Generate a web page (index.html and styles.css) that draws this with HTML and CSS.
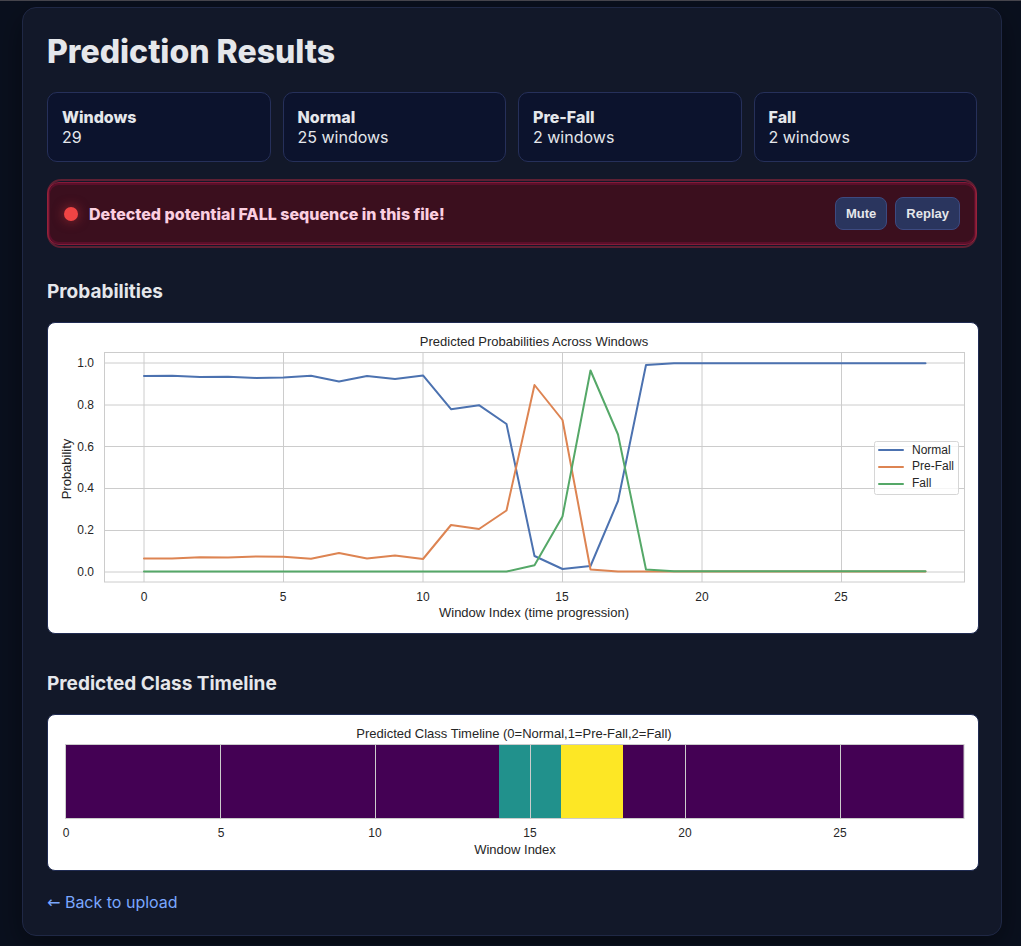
FILE: index.html
```html
<!DOCTYPE html>
<html lang="en">
<head>
<meta charset="utf-8">
<meta name="viewport" content="width=device-width, initial-scale=1">
<title>Prediction Results</title>
<link rel="stylesheet" href="styles.css">
</head>
<body>
<main class="card">
  <h1 class="title">Prediction Results</h1>

  <section class="stats" aria-label="Summary">
    <div class="stat"><strong>Windows</strong><span>29</span></div>
    <div class="stat"><strong>Normal</strong><span>25 windows</span></div>
    <div class="stat"><strong>Pre-Fall</strong><span>2 windows</span></div>
    <div class="stat"><strong>Fall</strong><span>2 windows</span></div>
  </section>

  <div class="alert" role="alert">
    <span class="alert-dot"></span>
    <strong class="alert-text">Detected potential FALL sequence in this file!</strong>
    <div class="alert-actions">
      <button class="btn" type="button">Mute</button>
      <button class="btn" type="button">Replay</button>
    </div>
  </div>

  <h2 class="heading">Probabilities</h2>
  <svg class="chart" viewBox="0 0 930 310" role="img" aria-label="Predicted probabilities across windows">
    <path class="grid" d="M96 29V259M235.5 29V259M375 29V259M514.5 29V259M654 29V259M793.5 29V259M56 40H916M56 82H916M56 123.5H916M56 165.5H916M56 207.5H916M56 249H916"/>
    <rect class="frame" x="56.5" y="29.5" width="860" height="229.5"/>
    <polyline class="line normal" points="96,53 124,52.8 152,54 180,53.7 208,54.9 235.5,54.6 263,52.7 291,58.4 319,53 347,55.9 375,52.4 403,86.2 431,82.2 458.5,101 486.5,233 514.5,246 542.5,243 570,178 598,42 626,40.2 877.5,40.2"/>
    <polyline class="line prefall" points="96,235.4 124,235.5 152,234.2 180,234.5 208,233.5 235.5,233.7 263,235.7 291,230 319,235.4 347,232.4 375,236 403,202 431,206 458.5,187.5 486.5,62 514.5,97 542.5,246.5 570,248.5 598,248.5 877.5,248.5"/>
    <polyline class="line fall" points="96,248.6 458.5,248.6 486.5,242.3 514.5,193.5 542.5,47.5 570,111.5 598,246.5 626,248.3 877.5,248.3"/>
    <text class="label mid" x="486" y="23">Predicted Probabilities Across Windows</text>
    <g class="tick end">
      <text x="46" y="44">1.0</text><text x="46" y="86">0.8</text><text x="46" y="128">0.6</text>
      <text x="46" y="169">0.4</text><text x="46" y="211">0.2</text><text x="46" y="253">0.0</text>
    </g>
    <g class="tick mid">
      <text x="96" y="278">0</text><text x="235" y="278">5</text><text x="375" y="278">10</text>
      <text x="514" y="278">15</text><text x="654" y="278">20</text><text x="793" y="278">25</text>
    </g>
    <text class="label mid" x="486" y="294">Window Index (time progression)</text>
    <text class="label mid" transform="translate(23 146) rotate(-90)">Probability</text>
    <rect class="legend" x="826.5" y="118.5" width="84" height="53" rx="2"/>
    <path class="line normal" d="M831 127H855"/>
    <path class="line prefall" d="M831 144H855"/>
    <path class="line fall" d="M831 161H855"/>
    <g class="tick">
      <text x="864" y="131">Normal</text><text x="864" y="147">Pre-Fall</text><text x="864" y="164">Fall</text>
    </g>
  </svg>

  <h2 class="heading">Predicted Class Timeline</h2>
  <svg class="chart" viewBox="0 0 930 155" role="img" aria-label="Predicted class timeline">
    <rect class="class-normal" x="18" y="29.5" width="898" height="74"/>
    <rect class="class-prefall" x="451" y="29.5" width="62" height="74"/>
    <rect class="class-fall" x="513" y="29.5" width="62" height="74"/>
    <path class="grid" d="M172.5 29V104M327.5 29V104M482.5 29V104M637.5 29V104M792.5 29V104"/>
    <rect class="frame" x="17.5" y="29.5" width="898.5" height="74"/>
    <text class="label mid" x="466" y="23">Predicted Class Timeline (0=Normal,1=Pre-Fall,2=Fall)</text>
    <g class="tick mid">
      <text x="18" y="122">0</text><text x="173" y="122">5</text><text x="327" y="122">10</text>
      <text x="482" y="122">15</text><text x="637" y="122">20</text><text x="792" y="122">25</text>
    </g>
    <text class="label mid" x="467" y="139">Window Index</text>
  </svg>

  <p class="back"><a href="#upload"><span class="arrow">←</span> Back to upload</a></p>
</main>
</body>
</html>
```
FILE: styles.css
```css
body {
  margin: 0;
  padding: 6px 19px 9px 22px;
  border-top: 1px solid #45444c;
  background: #0a101e;
  color: #e5e7eb;
  font-family: Inter, sans-serif;
  font-size: 16px;
  line-height: 20px;
}

.card {
  padding: 24px 24px 22px;
  border: 1px solid #1f2845;
  border-radius: 14px;
  background: #121829;
  box-shadow: 0 10px 30px rgba(0, 0, 0, 0.4);
}

.title {
  margin: 0 0 20px;
  font-size: 32px;
  font-weight: 800;
  line-height: 40px;
}

.stats {
  display: grid;
  grid-template-columns: repeat(4, 1fr);
  gap: 12px;
}

.stat {
  display: flex;
  flex-direction: column;
  padding: 14px;
  border: 1px solid #26305a;
  border-radius: 10px;
  background: #0c132d;
}

.stat strong,
.alert-text {
  font-weight: 800;
}

.alert {
  position: relative;
  display: flex;
  align-items: center;
  gap: 11px;
  margin: 20px 0 36px;
  padding: 14px 16px;
  border: 1px solid #851a38;
  border-radius: 12px;
  background: #3b0f1e;
  box-shadow: inset 0 0 0 2px #5a0f2a;
}

.alert::before {
  content: "";
  position: absolute;
  inset: -4px -1px;
  border: 2px solid rgba(170, 40, 62, 0.5);
  border-radius: 14px;
  pointer-events: none;
}

.alert-dot {
  width: 14px;
  height: 14px;
  border-radius: 50%;
  background: #ef4444;
  box-shadow: 0 0 12px rgba(239, 68, 68, 0.5);
}

.alert-text {
  flex: 1;
  color: #fbcfe0;
}

.alert-actions {
  display: flex;
  gap: 8px;
}

.btn {
  padding: 8px 10px;
  border: 1px solid #3d4a80;
  border-radius: 8px;
  background: #2a355e;
  color: #e5e7eb;
  font: bold 13px/15px "Liberation Sans", Arial, sans-serif;
}

.heading {
  margin: 0 0 19px;
  font-size: 19px;
  line-height: 22px;
}

.chart {
  display: block;
  width: 100%;
  margin-bottom: 39px;
  border: 1px solid #202b52;
  border-radius: 8px;
  background: #fff;
  font-family: "Liberation Sans", Arial, sans-serif;
  fill: #262626;
}

.grid,
.frame,
.line {
  fill: none;
}

.grid,
.frame {
  stroke: #ccc;
}

.line {
  stroke-width: 2;
  stroke-linejoin: round;
  stroke-linecap: round;
}

.normal { stroke: #4c72b0; }
.prefall { stroke: #dd8452; }
.fall { stroke: #55a868; }

.legend {
  fill: rgba(255, 255, 255, 0.8);
  stroke: #d6d6d6;
}

.label { font-size: 13px; }
.tick { font-size: 12px; }
.mid { text-anchor: middle; }
.end { text-anchor: end; }

.class-normal { fill: #440154; }
.class-prefall { fill: #21918c; }
.class-fall { fill: #fde725; }

.back {
  margin: -18px 0 0;
}

.back a {
  color: #7aa7ff;
  text-decoration: none;
}

.arrow {
  font-family: "DejaVu Sans", sans-serif;
}
```
